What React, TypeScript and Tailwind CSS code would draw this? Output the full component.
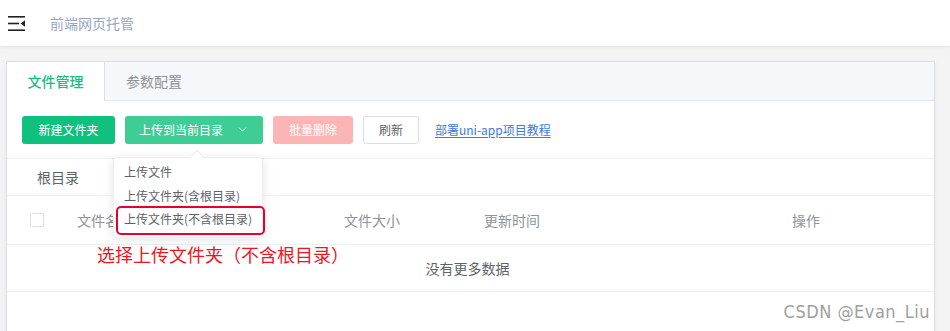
import { ChevronDown } from "lucide-react";

const FONT = { fontFamily: '"Noto Sans CJK SC", "Noto Sans", sans-serif' };

function FoldIcon() {
  return (
    <svg width="17" height="15" viewBox="0 0 17 15" className="block">
      <rect x="0" y="0" width="17" height="1.6" fill="#222" />
      <rect x="0" y="6.7" width="11" height="1.6" fill="#222" />
      <polygon points="17,4.2 17,10.8 12.6,7.5" fill="#222" />
      <rect x="0" y="13.4" width="17" height="1.6" fill="#222" />
    </svg>
  );
}

export default function App() {
  return (
    <div className="w-[950px] h-[331px] overflow-hidden bg-[#f4f4f4] text-[#606266]" style={FONT}>
      {/* top bar */}
      <div className="h-[46px] bg-white flex items-center pl-[8px] shadow-[0_1px_3px_rgba(0,0,0,0.08)] relative z-10">
        <FoldIcon />
        <span className="ml-[25px] text-[14px] text-[#98a6c1]">前端网页托管</span>
      </div>

      <div className="pt-[15px] pl-[6px] pr-[15px]">
        <div className="bg-white border border-[#dcdfe6] h-[300px] shadow-[0_2px_6px_rgba(0,0,0,0.06)] relative">
          {/* tabs */}
          <div className="h-[39px] bg-[#f5f7fa] border-b border-[#e4e7ed] flex">
            <div className="w-[98px] h-[39px] bg-white border-r border-[#dcdfe6] flex items-center justify-center text-[14px] text-[#13bf80] font-medium">
              文件管理
            </div>
            <div className="px-[21px] flex items-center text-[14px] text-[#909399]">参数配置</div>
          </div>

          {/* toolbar */}
          <div className="h-[58px] flex items-center pl-[15px] gap-[10px] border-b border-[#ebeef5]">
            <button className="h-[28px] w-[93px] rounded-[3px] bg-[#0fc07f] text-white text-[12px]">新建文件夹</button>
            <button className="h-[28px] w-[138px] rounded-[3px] bg-[#3fcd96] text-white text-[12px] flex items-center justify-center gap-[13px]">
              上传到当前目录
              <ChevronDown size={13} strokeWidth={1.5} />
            </button>
            <button className="h-[28px] w-[80px] rounded-[3px] bg-[#fcb5b5] text-white text-[12px]">批量删除</button>
            <button className="h-[28px] w-[56px] rounded-[3px] bg-white border border-[#dcdfe6] text-[#606266] text-[12px]">刷新</button>
            <a className="ml-[6px] text-[12px] text-[#3e7ae0] underline underline-offset-2">部署uni-app项目教程</a>
          </div>

          {/* breadcrumb */}
          <div className="h-[37px] flex items-center pl-[30px] text-[14px] text-[#606266] border-b border-[#ebeef5]">根目录</div>

          {/* table header */}
          <div className="h-[49px] flex items-center border-b border-[#ebeef5] text-[14px] text-[#909399]">
            <div className="w-[14px] h-[14px] ml-[23px] border border-[#dcdfe6] rounded-[2px] bg-white" />
            <div className="ml-[33px] w-[267px]">文件名</div>
            <div className="w-[140px]">文件大小</div>
            <div className="w-[308px]">更新时间</div>
            <div>操作</div>
          </div>

          {/* empty row */}
          <div className="h-[47px] flex items-center justify-center border-b border-[#ebeef5] text-[14px] text-[#606266] pr-[6px]">
            没有更多数据
          </div>

          <div className="flex justify-end pr-[4px] pt-[6px]">
            <span className="text-[18px] text-[#a0a0a0] tracking-[0.5px]" style={{ fontFamily: '"DejaVu Sans Condensed", "DejaVu Sans", sans-serif' }}>
              CSDN @Evan_Liu
            </span>
          </div>

          {/* dropdown menu */}
          <div className="absolute left-[106px] top-[95px] w-[150px] bg-white border border-[#ebeef5] rounded-[4px] shadow-[0_2px_12px_rgba(0,0,0,0.1)] pt-[2px] pb-[6px] text-[12px] text-[#606266] whitespace-nowrap">
            <div className="absolute -top-[6px] left-[78px] w-[10px] h-[10px] bg-white border-l border-t border-[#ebeef5] rotate-45" />
            <div className="h-[24px] flex items-center pl-[10px] relative">上传文件</div>
            <div className="h-[23px] flex items-center pl-[10px]">上传文件夹(含根目录)</div>
            <div className="h-[24px] flex items-center pl-[10px]">上传文件夹(不含根目录)</div>
          </div>
          <div className="absolute left-[109px] top-[144px] w-[149px] h-[29px] border-2 border-[#e8002b] rounded-[5px]" />

          {/* annotation */}
          <div className="absolute left-[90px] top-[180px] text-[18px] text-[#f0141e] leading-[24px]">
            选择上传文件夹（不含根目录）
          </div>
        </div>
      </div>
    </div>
  );
}
